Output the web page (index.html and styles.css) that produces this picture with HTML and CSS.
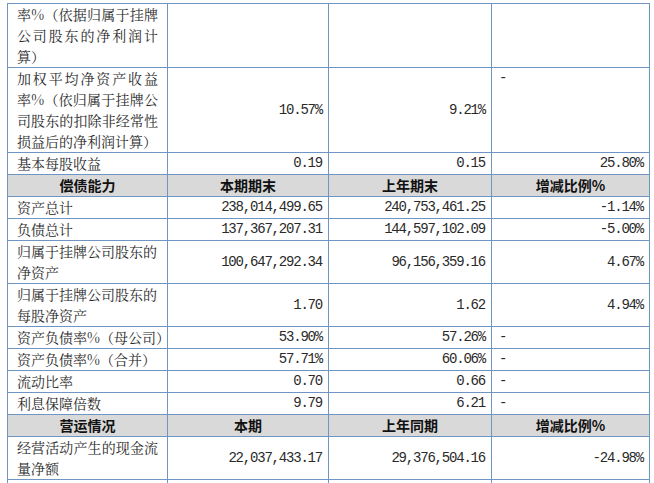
FILE: index.html
```html
<!DOCTYPE html>
<html lang="zh-CN">
<head>
<meta charset="utf-8">
<title>主要财务数据</title>
<link rel="stylesheet" href="styles.css">
</head>
<body>
<div class="page">
<table class="fin">
<colgroup><col class="c1"><col class="c2"><col class="c3"><col class="c4"></colgroup>
<tbody>
<tr>
<td class="lbl"><span class="ln j">率%（依据归属于挂牌</span><span class="ln j">公司股东的净利润计</span><span class="ln">算）</span></td>
<td></td><td></td><td></td>
</tr>
<tr>
<td class="lbl"><span class="ln j">加权平均净资产收益</span><span class="ln j">率%（依归属于挂牌公</span><span class="ln j">司股东的扣除非经常性</span><span class="ln">损益后的净利润计算）</span></td>
<td class="num">10.57%</td><td class="num">9.21%</td><td class="dash top">-</td>
</tr>
<tr>
<td class="lbl">基本每股收益</td>
<td class="num">0.19</td><td class="num">0.15</td><td class="num">25.80%</td>
</tr>
<tr class="hd">
<td>偿债能力</td><td>本期期末</td><td>上年期末</td><td>增减比例%</td>
</tr>
<tr>
<td class="lbl">资产总计</td>
<td class="num">238,014,499.65</td><td class="num">240,753,461.25</td><td class="num">-1.14%</td>
</tr>
<tr>
<td class="lbl">负债总计</td>
<td class="num">137,367,207.31</td><td class="num">144,597,102.09</td><td class="num">-5.00%</td>
</tr>
<tr>
<td class="lbl"><span class="ln">归属于挂牌公司股东的</span><span class="ln">净资产</span></td>
<td class="num">100,647,292.34</td><td class="num">96,156,359.16</td><td class="num">4.67%</td>
</tr>
<tr>
<td class="lbl"><span class="ln">归属于挂牌公司股东的</span><span class="ln">每股净资产</span></td>
<td class="num">1.70</td><td class="num">1.62</td><td class="num">4.94%</td>
</tr>
<tr>
<td class="lbl">资产负债率%（母公司）</td>
<td class="num">53.90%</td><td class="num">57.26%</td><td class="dash">-</td>
</tr>
<tr>
<td class="lbl">资产负债率%（合并）</td>
<td class="num">57.71%</td><td class="num">60.06%</td><td class="dash">-</td>
</tr>
<tr>
<td class="lbl">流动比率</td>
<td class="num">0.70</td><td class="num">0.66</td><td class="dash">-</td>
</tr>
<tr>
<td class="lbl">利息保障倍数</td>
<td class="num">9.79</td><td class="num">6.21</td><td class="dash">-</td>
</tr>
<tr class="hd">
<td>营运情况</td><td>本期</td><td>上年同期</td><td>增减比例%</td>
</tr>
<tr>
<td class="lbl"><span class="ln j">经营活动产生的现金流</span><span class="ln">量净额</span></td>
<td class="num">22,037,433.17</td><td class="num">29,376,504.16</td><td class="num">-24.98%</td>
</tr>
<tr class="tail">
<td>&nbsp;</td><td>&nbsp;</td><td>&nbsp;</td><td>&nbsp;</td>
</tr>
</tbody>
</table>
</div>
</body>
</html>
```

FILE: styles.css
```css
* {
  box-sizing: border-box;
}

body {
  margin: 0;
  background: #ffffff;
  color: #2a2a2a;
  font-family: "Noto Serif CJK SC", "Noto Sans CJK SC", serif;
  font-size: 14px;
}

.page {
  padding: 3px 0 0 7px;
}

.fin {
  border-collapse: collapse;
  table-layout: fixed;
  width: 643px;
}

.c1 { width: 160px; }
.c2 { width: 161px; }
.c3 { width: 163px; }
.c4 { width: 158px; }

.fin td {
  border: 1px solid #6f95c2;
  padding: 0 7px 0 9px;
  line-height: 21px;
  vertical-align: middle;
  white-space: nowrap;
  overflow: visible;
}

.fin td.lbl {
  padding-right: 9px;
}

.ln {
  display: block;
}

.ln.j {
  text-align: justify;
  text-align-last: justify;
}

.fin td.num {
  font-family: "Liberation Mono", "DejaVu Sans Mono", monospace;
  letter-spacing: -1.2px;
  text-align: right;
  padding-right: 6px;
}

.fin td.dash {
  font-family: "Liberation Mono", monospace;
  text-align: left;
  padding-left: 7px;
}

.fin td.top {
  vertical-align: top;
}

.hd td {
  background: #d9d9d9;
  font-family: "Noto Sans CJK SC", sans-serif;
  font-weight: 700;
  text-align: center;
  color: #111111;
}

.fin .hd td {
  padding: 0;
}
```
